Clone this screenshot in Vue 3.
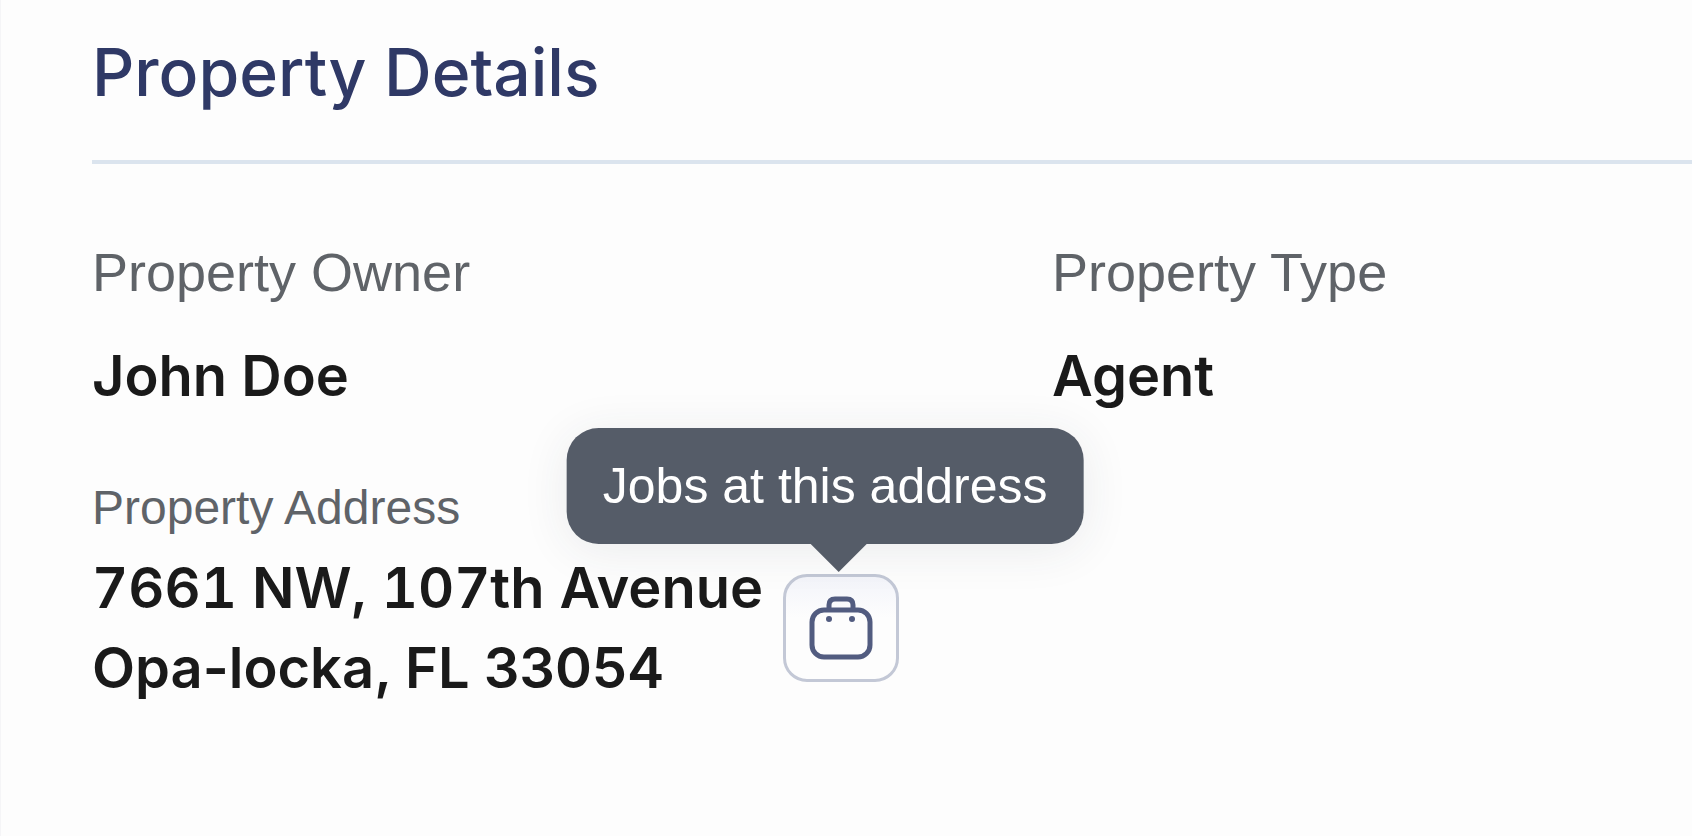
<script setup>
const owner = { label: 'Property Owner', value: 'John Doe' }
const type = { label: 'Property Type', value: 'Agent' }
</script>

<template>
  <main class="panel">
    <header class="panel-header">
      <h1>Property Details</h1>
    </header>
    <dl class="details">
      <div class="field">
        <dt>{{ owner.label }}</dt>
        <dd>{{ owner.value }}</dd>
      </div>
      <div class="field">
        <dt>{{ type.label }}</dt>
        <dd>{{ type.value }}</dd>
      </div>
      <div class="field address">
        <dt>Property Address</dt>
        <dd class="address-row">
          <span><span class="street">7661 NW, 107th Avenue</span><br />Opa-locka, FL 33054</span>
          <span class="jobs">
            <button type="button" class="jobs-button" aria-label="Jobs" aria-describedby="jobs-tip">
              <svg viewBox="0 0 64 66" width="64" height="66" fill="none" aria-hidden="true">
                <rect x="3" y="15" width="58" height="47" rx="12" stroke="#525c80" stroke-width="5" />
                <path d="M20 15V10q0-6 6-6h12q6 0 6 6v5" stroke="#525c80" stroke-width="5" />
                <circle cx="20" cy="24" r="3" fill="#525c80" />
                <circle cx="43" cy="24" r="3" fill="#525c80" />
              </svg>
            </button>
            <span id="jobs-tip" class="tooltip" role="tooltip">Jobs at this address</span>
          </span>
        </dd>
      </div>
    </dl>
  </main>
</template>

<style>
body {
  margin: 0;
  background: #fdfdfd;
}
</style>

<style scoped>
.panel {
  box-sizing: border-box;
  min-height: 100vh;
  padding-left: 91px;
  border-left: 1px solid #f5f5f7;
  font-family: Inter, "Liberation Sans", sans-serif;
  color: #1a1a1a;
}
.panel-header {
  padding: 32px 0 48px;
  border-bottom: 4px solid #dbe4ee;
}
h1 {
  margin: 0;
  font-size: 66px;
  line-height: 80px;
  font-weight: 500;
  color: #2f3966;
}
.details {
  display: grid;
  grid-template-columns: 3fr 2fr;
  row-gap: 64px;
  margin: 0;
  padding-top: 76px;
}
.field {
  display: flex;
  flex-direction: column;
  gap: 32px;
}
dt {
  font-family: "Liberation Sans", Arial, sans-serif;
  font-size: 54px;
  line-height: 64px;
  color: #5f6368;
  white-space: nowrap;
}
dd {
  margin: 0;
  font-size: 56px;
  line-height: 80px;
  font-weight: 600;
  white-space: nowrap;
}
.street {
  font-variant-numeric: tabular-nums;
}
.address {
  grid-column: 1 / -1;
  gap: 12px;
}
.address dt {
  font-size: 48px;
  line-height: 56px;
}
.address-row {
  display: flex;
  align-items: center;
  gap: 20px;
}
.jobs {
  position: relative;
  display: flex;
}
.jobs-button {
  display: flex;
  align-items: center;
  justify-content: center;
  width: 116px;
  height: 108px;
  padding: 0;
  border: 3px solid #c3c8d6;
  border-radius: 24px;
  background: linear-gradient(#f3f4fa, #fdfdfd 40%);
}
.tooltip {
  position: absolute;
  bottom: calc(100% + 30px);
  left: 50%;
  transform: translateX(-50%);
  margin-left: -16px;
  padding: 24px 36px;
  border-radius: 32px;
  background: #555c68;
  box-shadow: 0 6px 48px rgba(40, 50, 70, 0.09);
  color: #fff;
  font-family: "Liberation Sans", Arial, sans-serif;
  font-size: 50px;
  line-height: 68px;
  font-weight: 400;
}
.tooltip::after {
  content: "";
  position: absolute;
  top: 100%;
  left: 50%;
  margin-left: -14px;
  border: 28px solid transparent;
  border-top-color: #555c68;
  border-bottom-width: 0;
}
</style>
